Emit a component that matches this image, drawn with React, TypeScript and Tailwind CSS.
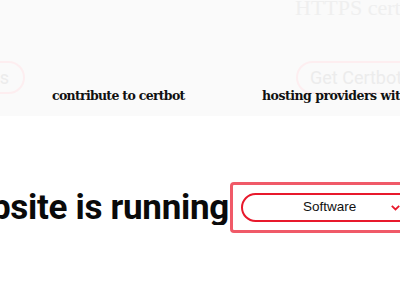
import React from "react";

export default function App() {
  return (
    <div className="w-[400px] h-[300px] overflow-hidden bg-white relative font-['Roboto',sans-serif]">
      {/* faded top band */}
      <div className="h-[116px] bg-[#fafafa] relative overflow-hidden">
        <div className="flex h-[22px] -mt-[3px]">
          <div className="w-[230px] shrink-0" />
          <div className="pl-[65px] whitespace-nowrap text-[22px] leading-[22px] text-[#efefef] font-['Liberation_Serif',serif]">
            HTTPS certificates
          </div>
        </div>
        <div className="flex mt-[42px] items-start">
          <div className="-ml-[60px] w-[85px] h-[33px] rounded-full border-2 border-[#fdeef0] flex items-center justify-end pr-[14px] text-[18px] text-[#ececec] shrink-0">
            ers
          </div>
          <div className="ml-[271px] w-[160px] h-[33px] rounded-full border-2 border-[#fdeef0] flex items-center pl-[12px] text-[18px] text-[#ececec] whitespace-nowrap shrink-0">
            Get Certbot instructions
          </div>
        </div>
        <div className="absolute left-0 top-[87px] w-[400px] flex whitespace-nowrap font-bold text-[#111] font-['DejaVu_Serif',serif]">
          <div className="w-[262px] shrink-0 pl-[52px] text-[12.5px] tracking-[-0.7px]">contribute to certbot</div>
          <div className="text-[12.5px] tracking-[-0.5px]">hosting providers with HTTPS</div>
        </div>
      </div>

      {/* main row */}
      <div className="flex items-center mt-[66px]">
        <div className="w-[229px] shrink-0 overflow-hidden flex justify-end">
          <h1 className="whitespace-nowrap text-[35px] leading-none font-bold text-[#0a0a0a] tracking-[-0.3px]">
            website is running
          </h1>
        </div>
        <div className="ml-[1px] border-[3px] border-[#f05a68] rounded-[4px] p-[8px] w-[200px] shrink-0">
          <div className="h-[29px] rounded-full border-2 border-[#e8192c] flex items-center relative">
            <span className="ml-[60px] text-[13.5px] text-[#111] font-['Liberation_Sans',sans-serif]">Software</span>
            <svg className="absolute left-[148px] top-[10px]" width="9" height="6" viewBox="0 0 9 6">
              <path d="M0.8 0.8 L4.5 4.5 L8.2 0.8" stroke="#e8192c" strokeWidth="1.8" fill="none" />
            </svg>
          </div>
        </div>
      </div>
    </div>
  );
}
